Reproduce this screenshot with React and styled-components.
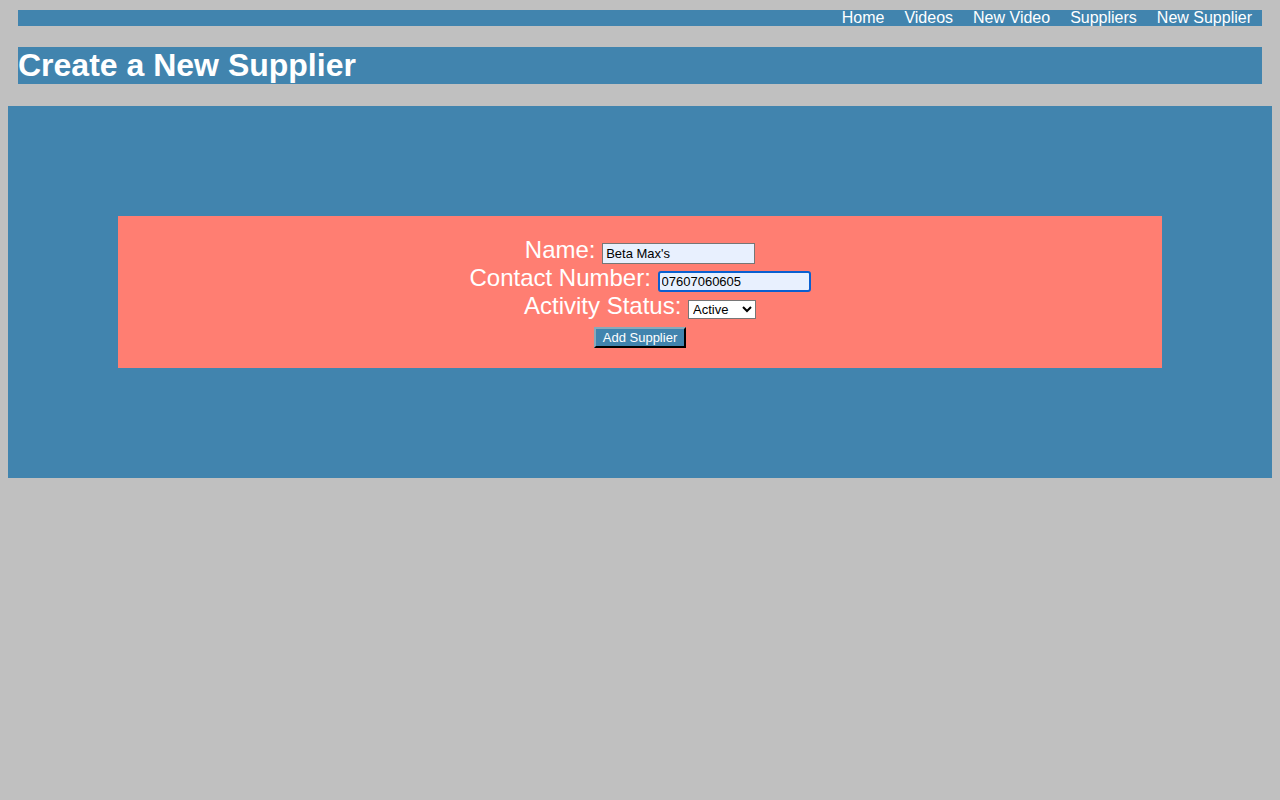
import React from "react";
import styled, { createGlobalStyle } from "styled-components";

const GlobalStyle = createGlobalStyle`
  html, body {
    background-color: #c0c0c0;
  }
  body {
    margin: 8px;
    font-family: "Liberation Sans", Arial, sans-serif;
  }
`;

const blue = "#4184ae";
const salmon = "#ff7e72";

const Header = styled.header`
  padding: 2px 10px 0;
`;

const Nav = styled.nav`
  display: flex;
  justify-content: flex-end;
  background-color: ${blue};
  height: 16px;
  padding-right: 10px;
`;

const NavLink = styled.a`
  color: #fff;
  text-decoration: none;
  font-size: 16px;
  line-height: 16px;
  margin-left: 20px;
  cursor: pointer;
`;

const Title = styled.h1`
  background-color: ${blue};
  color: #fff;
  font-size: 32px;
  line-height: 37px;
  font-weight: 700;
  margin: 21px 0 22px;
`;

const Main = styled.main`
  background-color: ${blue};
  padding: 110px;
`;

const Form = styled.form`
  background-color: ${salmon};
  padding: 20px 0;
  text-align: center;
  color: #fff;
`;

const Row = styled.div`
  font-size: 24px;
  line-height: 28px;
`;

const Input = styled.input`
  box-sizing: border-box;
  width: 153px;
  height: 21px;
  font-family: "Liberation Sans", Arial, sans-serif;
  font-size: 13px;
  padding: 1px 3px;
  background-color: #e8f0fe;
  color: #000;
  border: ${(p) => (p.$focused ? "2px solid #0a5fd0" : "1px solid #767676")};
  border-radius: ${(p) => (p.$focused ? "3px" : "0")};
  padding-left: ${(p) => (p.$focused ? "2px" : "3px")};
  outline: none;
  vertical-align: baseline;
`;

const Select = styled.select`
  box-sizing: border-box;
  width: 68px;
  height: 19px;
  font-family: "Liberation Sans", Arial, sans-serif;
  font-size: 13px;
  background-color: #fff;
  color: #000;
  border: 1px solid #767676;
  border-radius: 0;
  vertical-align: baseline;
`;

const ButtonRow = styled.div`
  margin-top: 7px;
  line-height: 21px;
`;

const Button = styled.button`
  box-sizing: border-box;
  width: 92px;
  height: 21px;
  background-color: ${blue};
  color: #fff;
  font-family: "Liberation Sans", Arial, sans-serif;
  font-size: 13px;
  padding: 0;
  border: 2px outset #2a2a2a;
  border-top-color: #8ab;
  border-left-color: #8ab;
  vertical-align: top;
`;

const links = ["Home", "Videos", "New Video", "Suppliers", "New Supplier"];

export default function App() {
  return (
    <>
      <GlobalStyle />
      <Header>
        <Nav>
          {links.map((l) => (
            <NavLink key={l}>{l}</NavLink>
          ))}
        </Nav>
        <Title>Create a New Supplier</Title>
      </Header>
      <Main>
        <Form onSubmit={(e) => e.preventDefault()}>
          <Row>
            Name: <Input defaultValue="Beta Max's" />
          </Row>
          <Row>
            Contact Number: <Input $focused defaultValue="07607060605" />
          </Row>
          <Row>
            Activity Status:{" "}
            <Select defaultValue="Active">
              <option>Active</option>
              <option>Inactive</option>
            </Select>
          </Row>
          <ButtonRow>
            <Button type="submit">Add Supplier</Button>
          </ButtonRow>
        </Form>
      </Main>
    </>
  );
}
